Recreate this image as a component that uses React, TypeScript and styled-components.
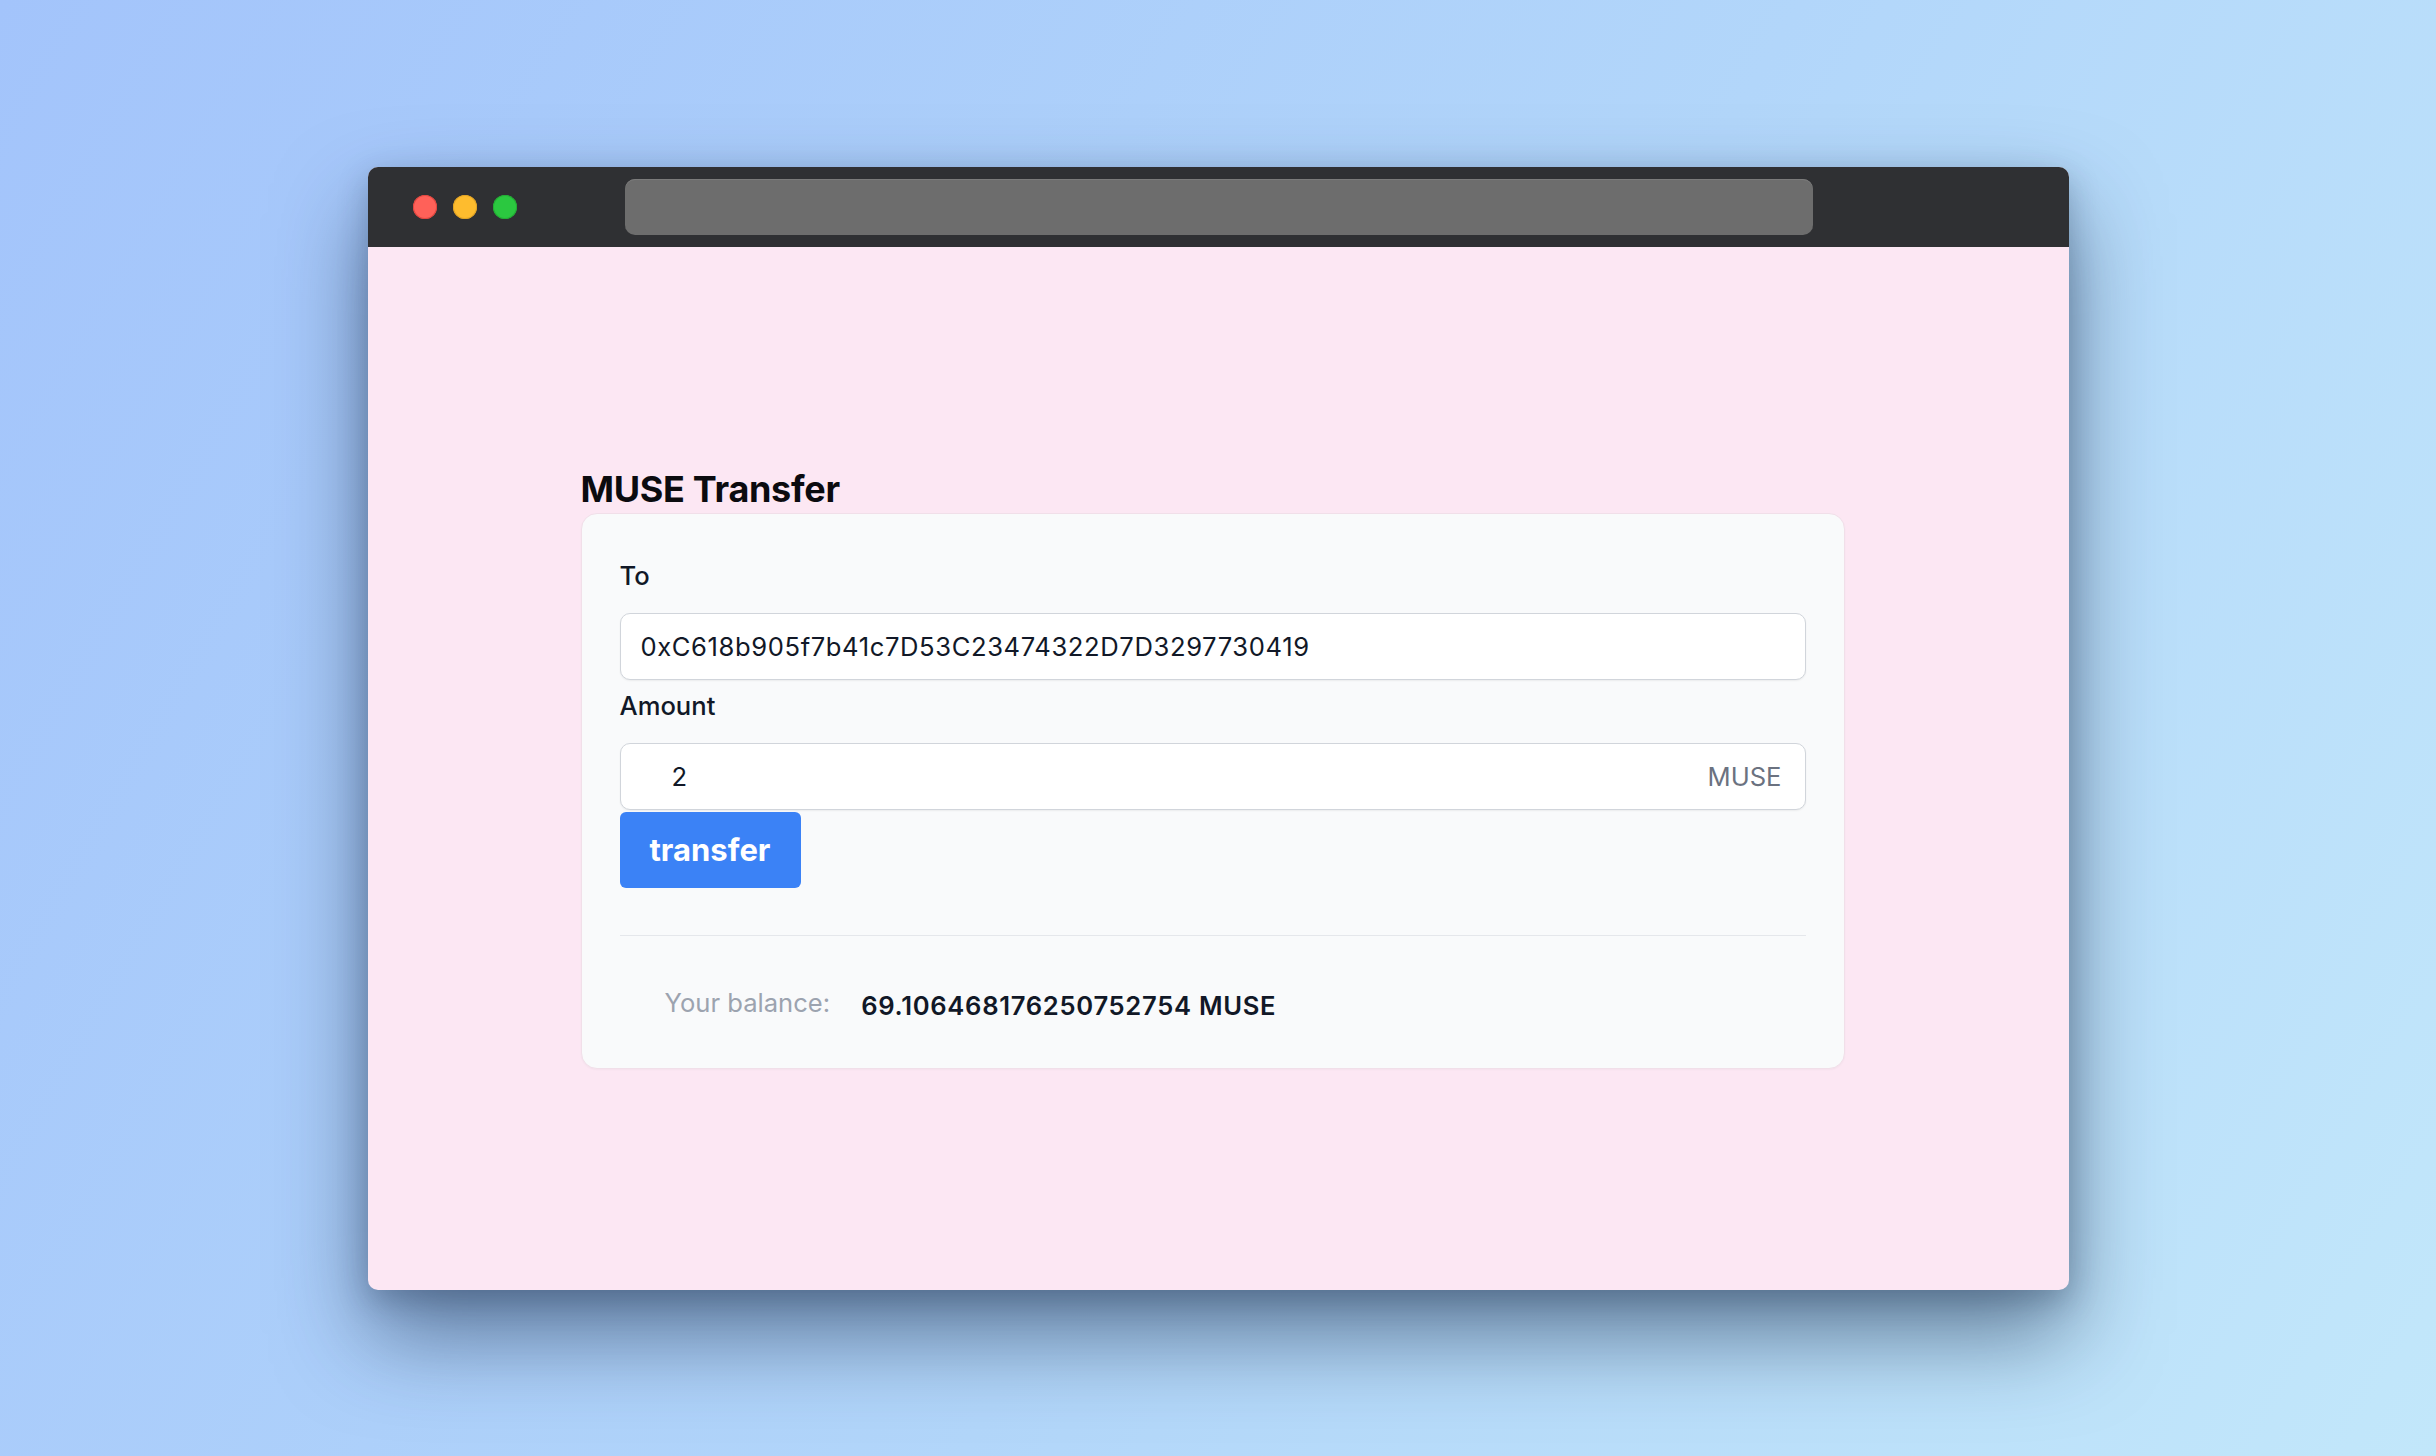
import React from "react";
import styled, { createGlobalStyle } from "styled-components";

const Global = createGlobalStyle`
  html, body { margin: 0; padding: 0; }
  body { font-family: Inter, "Noto Sans", "Liberation Sans", sans-serif; }
  * { box-sizing: border-box; }
`;

const Page = styled.div`
  width: 2436px;
  height: 1456px;
  display: flex;
  align-items: center;
  justify-content: center;
  background: linear-gradient(120deg, #a3c4fb 0%, #b2d6fa 55%, #c2e7fa 100%);
  overflow: hidden;
`;

const Window = styled.div`
  width: 1701px;
  height: 1123px;
  display: flex;
  flex-direction: column;
  border-radius: 10px;
  overflow: hidden;
  background: #fce7f3;
  box-shadow: 0 45px 90px rgba(25, 45, 75, 0.55), 0 10px 30px rgba(25, 45, 75, 0.25);
`;

const TitleBar = styled.div`
  height: 80px;
  flex: none;
  display: flex;
  align-items: center;
  padding: 0 256px 0 45px;
  background: #2f3033;
`;

const Lights = styled.div`
  display: flex;
  gap: 16px;
  margin-right: 108px;
`;

const Light = styled.span<{ $fill: string; $edge: string }>`
  width: 24px;
  height: 24px;
  border-radius: 50%;
  background: ${(p) => p.$fill};
  box-shadow: inset 0 0 0 1px ${(p) => p.$edge};
`;

const UrlBar = styled.div`
  flex: 1;
  height: 56px;
  border-radius: 10px;
  background: #6d6d6d;
  box-shadow: inset 0 1px 0 #7b7b7b;
`;

const Content = styled.main`
  flex: 1;
  padding: 222px 0 0 213px;
`;

const Panel = styled.section`
  width: 1264px;
`;

const Heading = styled.h1`
  margin: 0 0 3px;
  font-size: 36px;
  line-height: 41px;
  font-weight: 700;
  color: #0b0b0f;
  letter-spacing: -0.3px;
`;

const Card = styled.div`
  display: flex;
  flex-direction: column;
  align-items: stretch;
  padding: 42px 38px 43px;
  background: #f9fafb;
  border: 1px solid #f1dfe9;
  border-radius: 16px;
  box-shadow: 0 1px 2px rgba(0, 0, 0, 0.03);
`;

const Label = styled.label<{ $first?: boolean }>`
  display: block;
  margin: ${(p) => (p.$first ? "1px" : "7px")} 0 18px;
  font-size: 25.6px;
  line-height: 38px;
  font-weight: 500;
  color: #111827;
`;

const Field = styled.div`
  height: 67px;
  display: flex;
  align-items: center;
  background: #ffffff;
  border: 1px solid #d1d5db;
  border-radius: 10px;
  box-shadow: 0 1px 2px rgba(0, 0, 0, 0.06);
`;

const FieldInput = styled.input<{ $indent: number }>`
  flex: 1;
  min-width: 0;
  height: 100%;
  border: none;
  outline: none;
  background: transparent;
  padding: 0 0 0 ${(p) => p.$indent}px;
  font-family: Inter, "Noto Sans", "Liberation Sans", sans-serif;
  font-size: 25.6px;
  letter-spacing: 0.6px;
  color: #111827;
`;

const Suffix = styled.span`
  padding-right: 23px;
  font-size: 25.6px;
  color: #6b7280;
`;

const Button = styled.button`
  align-self: flex-start;
  width: 181px;
  height: 76px;
  margin-top: 2px;
  border: none;
  border-radius: 6px;
  background: #3b82f6;
  color: #ffffff;
  font-family: Inter, "Noto Sans", "Liberation Sans", sans-serif;
  font-size: 31px;
  font-weight: 700;
  letter-spacing: 0;
  cursor: pointer;
`;

const Divider = styled.hr`
  margin: 47px 0 48px;
  border: none;
  height: 1px;
  background: #e5e7eb;
`;

const BalanceRow = styled.div`
  display: flex;
  align-items: flex-start;
  gap: 31px;
  padding-left: 45px;
`;

const BalanceLabel = styled.span`
  font-size: 25.6px;
  line-height: 38px;
  color: #9ca3af;
`;

const BalanceValue = styled.span`
  margin-top: 3px;
  font-size: 25.6px;
  line-height: 38px;
  font-weight: 600;
  letter-spacing: 0.7px;
  color: #111827;
`;

export default function App() {
  return (
    <>
      <Global />
      <Page>
        <Window>
          <TitleBar>
            <Lights>
              <Light $fill="#ff6159" $edge="#e2463f" />
              <Light $fill="#febc2e" $edge="#e1a325" />
              <Light $fill="#2bc840" $edge="#23ad34" />
            </Lights>
            <UrlBar />
          </TitleBar>
          <Content>
            <Panel>
              <Heading>MUSE Transfer</Heading>
              <Card>
                <Label $first>To</Label>
                <Field>
                  <FieldInput
                    $indent={20}
                    readOnly
                    value="0xC618b905f7b41c7D53C23474322D7D3297730419"
                  />
                </Field>
                <Label>Amount</Label>
                <Field>
                  <FieldInput $indent={51} readOnly value="2" />
                  <Suffix>MUSE</Suffix>
                </Field>
                <Button>transfer</Button>
                <Divider />
                <BalanceRow>
                  <BalanceLabel>Your balance:</BalanceLabel>
                  <BalanceValue>69.106468176250752754 MUSE</BalanceValue>
                </BalanceRow>
              </Card>
            </Panel>
          </Content>
        </Window>
      </Page>
    </>
  );
}
